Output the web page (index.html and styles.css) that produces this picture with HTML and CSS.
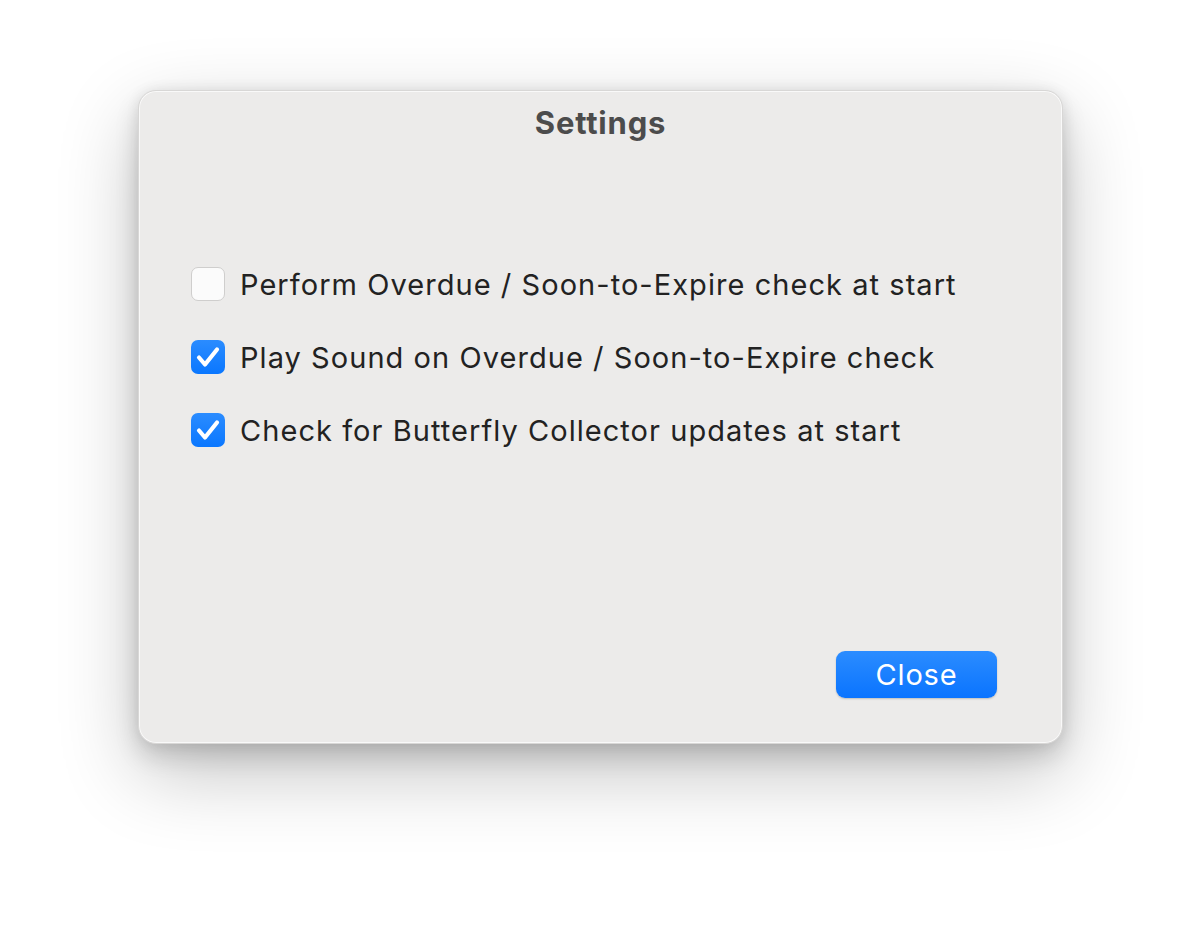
FILE: index.html
```html
<!DOCTYPE html>
<html lang="en">
<head>
    <meta charset="UTF-8">
    <title>Settings</title>
    <link rel="stylesheet" href="styles.css">
</head>
<body>

<div class="stage">
<div class="window">
    <div class="title">Settings</div>

    <div class="options">
        <label class="option">
            <span class="box"></span>
            <span class="label">Perform Overdue / Soon-to-Expire check at start</span>
        </label>
        <label class="option">
            <span class="box checked">
                <svg viewBox="0 0 34 34" width="34" height="34"><path d="M8 17.5 L14 24.5 L26 9.5" fill="none" stroke="#fff" stroke-width="4.2" stroke-linecap="round" stroke-linejoin="round"/></svg>
            </span>
            <span class="label">Play Sound on Overdue / Soon-to-Expire check</span>
        </label>
        <label class="option">
            <span class="box checked">
                <svg viewBox="0 0 34 34" width="34" height="34"><path d="M8 17.5 L14 24.5 L26 9.5" fill="none" stroke="#fff" stroke-width="4.2" stroke-linecap="round" stroke-linejoin="round"/></svg>
            </span>
            <span class="label">Check for Butterfly Collector updates at start</span>
        </label>
    </div>

    <div class="footer">
        <button class="close">Close</button>
    </div>
</div>
</div>

</body>
</html>
```

FILE: styles.css
```css
html, body { height: 100%; }
body { margin: 0; background: #fff; font-family: Inter, "Liberation Sans", sans-serif; }
.stage { padding: 90px 0 0 138px; height: 100%; box-sizing: border-box; }
.window {
    width: 925px; height: 654px; box-sizing: border-box;
    background: #ecebea; border-radius: 18px;
    border: 1px solid #d8d7d6;
    box-shadow: 0 0 0 1px rgba(255,255,255,0.7) inset, 0 12px 24px rgba(0,0,0,0.14), 0 28px 80px rgba(0,0,0,0.24), 0 0 14px rgba(0,0,0,0.07);
    display: flex; flex-direction: column;
}
.title { text-align: center; font-weight: 700; font-size: 31px; letter-spacing: 0.8px; color: #4c4c4c; padding-top: 13px; line-height: 38px; }
.options { display: flex; flex-direction: column; gap: 39px; padding: 125px 0 0 52px; }
.option { display: flex; align-items: center; gap: 15px; height: 34px; }
.box {
    width: 34px; height: 34px; box-sizing: border-box; border-radius: 7px;
    background: #fbfbfb; border: 1px solid #cfcecd; display: block;
}
.box.checked { background: linear-gradient(#2b8cff, #0a77ff); border: none; }
.box svg { display: block; }
.label { font-size: 29px; letter-spacing: 1.05px; color: #222; }
.footer { margin-top: auto; display: flex; justify-content: flex-end; padding: 0 65px 45px 0; }
.close {
    width: 161px; height: 47px; border: none; border-radius: 9px;
    background: linear-gradient(#2b8cff, #0a74ff); color: #fff;
    font-family: Inter, "Liberation Sans", sans-serif; font-size: 29px; letter-spacing: 0.8px;
    box-shadow: 0 1px 2px rgba(0,0,0,0.2);
}
```
